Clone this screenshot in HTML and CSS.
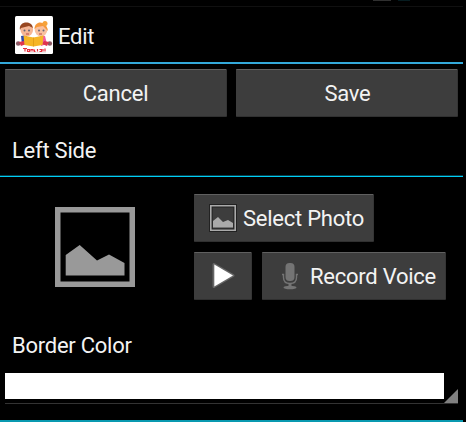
FILE: index.html
```html
<!DOCTYPE html>
<html lang="en">
<head>
<meta charset="utf-8">
<title>Edit</title>
<link rel="stylesheet" href="styles.css">
</head>
<body>
<div class="status"><i class="status-a"></i><i class="status-b"></i></div>
<main class="screen">
  <header class="bar">
    <svg class="logo" viewBox="0 0 38 38">
      <rect width="38" height="38" rx="1.5" fill="#fff"/>
      <path d="M6 20l6-1v9l-5 1z" fill="#304caa"/>
      <path d="M25 19l5 1 2 8-6 2z" fill="#f45ca0"/>
      <circle cx="3.200" cy="27.500" r="2.300" fill="#8a5964"/><circle cx="34.800" cy="27.500" r="2.300" fill="#8a5964"/>
      <path d="M4 26l5-1 2 3-5 2zM34 26l-5-1-2 3 5 2z" fill="#df344d"/>
      <circle cx="11.800" cy="14" r="6.300" fill="#f5b696"/><circle cx="26" cy="14" r="6.300" fill="#f9c1a0"/>
      <path d="M5 14C3 5 17 4 18 12l-4-2-8 2z" fill="#984721"/>
      <path d="M19.500 13c0-9 12-9 13.500 2l-5-5-6 1z" fill="#f6983a"/><circle cx="30" cy="7.500" r="2.500" fill="#f6a33a"/>
      <circle cx="9.500" cy="14.500" r="1" fill="#667"/><circle cx="14" cy="14.500" r="1" fill="#667"/><circle cx="24" cy="14.500" r="1" fill="#667"/><circle cx="28.500" cy="14.500" r="1" fill="#667"/>
      <path d="M11 18h3M24 18h3" stroke="#b84b45"/>
      <path d="M8.500 19.500l10 2 10-2-1 9.500-9 1.500-9-1.500z" fill="#f6b526"/>
      <path d="M18.500 21.500v9" stroke="#dc9413" stroke-width=".7"/>
      <path d="M8 32.500h4M10 32.500v3M12.500 33.500h2v2h-2zM16 35.500v-2h2v2M19.500 33.500v2h1M22.500 33v2.500M24.500 33.500h2v2h-2M28 33v2.500M30 32.500v3" fill="none" stroke="#e52e3c" stroke-width="1.200"/>
      <path d="M13 36.700h18" stroke="#ddd" stroke-width=".8"/>
    </svg>
    <h1 class="text title">Edit</h1>
  </header>
  <div class="actions">
    <button class="btn wide"><span class="text cancel">Cancel</span></button>
    <button class="btn wide"><span class="text save">Save</span></button>
  </div>
  <h2 class="section"><span class="text left">Left Side</span></h2>
  <section class="photo">
    <svg class="preview" viewBox="0 0 80 80">
      <path d="M2.750 2.750h74.500v74.500H2.750z" fill="none" stroke="#999" stroke-width="5.500"/>
      <path d="M10.700 48l14-10L42 53.500l12-6L69.500 56v12.500H10.700z" fill="#999"/>
    </svg>
    <div class="controls">
      <button class="btn select">
        <svg class="pic" viewBox="0 0 28 28">
          <path d="M1.800 1.800h24.400v24.400H1.800z" fill="none" stroke="#222" stroke-width="3.600"/>
          <path d="M1.800 1.800h24.400v24.400H1.800z" fill="none" stroke="#aaa" stroke-width="1.600"/>
          <path d="M4 17l5-4 5 5 5-2 5 3v4.500H4z" fill="#aaa"/>
        </svg>
        <span class="text select-text">Select Photo</span>
      </button>
      <div class="row">
        <button class="btn play" aria-label="Play">
          <svg width="24" height="28" viewBox="0 0 24 28"><path d="M2 2.500v22L21 13.500z" fill="#fff" stroke="#666" stroke-width="3" stroke-linejoin="round"/><path d="M2.300 2.500v22L21 13.500z" fill="#fff"/></svg>
        </button>
        <button class="btn record">
          <svg class="mic" viewBox="0 0 18 28"><rect x="4.500" y="1" width="9" height="18" rx="4" fill="#747474"/><path d="M1 12.500h1.500v3c0 4 2.500 6 6.500 6s6.500-2 6.500-6v-3H17" fill="none" stroke="#747474" stroke-width="1.400"/><path d="M7.500 21h3v3h-3z" fill="#747474"/><ellipse cx="9" cy="25.500" rx="6.500" ry="1.700" fill="#747474"/></svg>
          <span class="text record-text">Record Voice</span>
        </button>
      </div>
    </div>
  </section>
  <h3 class="label"><span class="text border">Border Color</span></h3>
  <div class="spinner"><div class="swatch"></div><svg class="corner" viewBox="0 0 14 14"><path d="M14 0v14H0z" fill="#808080"/></svg></div>
  <div class="end"></div>
</main>
</body>
</html>
```
FILE: styles.css
```css
* { box-sizing: border-box; }
body { margin: 0; height: 422px; overflow: hidden; background: #000; color: #f3f3f3; font: 400 22px/28px Roboto, sans-serif; letter-spacing: -0.25px; }
h1, h2, h3 { margin: 0; font: inherit; }
svg { display: block; flex: none; }
.status { display: flex; align-items: flex-start; gap: 7px; width: 463px; height: 7px; padding-left: 373px; border-bottom: 1px solid #101010; }
.status-a { width: 18px; height: 1px; background: #303030; }
.status-b { width: 12px; height: 1px; background: #061c20; }
.screen { width: 463px; }
.bar { display: flex; align-items: center; height: 57px; padding: 1px 0 0 15px; border-bottom: 2px solid #33a9da; }
.logo { width: 38px; height: 38px; margin-right: 5px; margin-top: 0; }
.text { white-space: nowrap; }
.title { margin-top: 3px; }
.actions { display: flex; gap: 9px; padding: 5px 5px 0; }
.btn { display: flex; align-items: center; height: 48px; margin: 0; padding: 0; border: solid; border-width: 1px 1px 1px 0; border-color: #606060 #353535 #303030; border-radius: 1px; background: #3d3d3d; color: inherit; font: inherit; letter-spacing: inherit; }
.wide { width: 222px; justify-content: center; padding-top: 1px; }
.save { margin-left: 2px; }
.section { height: 60px; padding: 20px 0 0 12px; border-bottom: 1px solid #00cdf5; box-shadow: inset 0 -1px #053f4b; }
.photo { display: flex; height: 142px; padding: 17px 0 0 55px; }
.preview { width: 80px; height: 80px; margin: 13px 59px 0 0; }
.controls { display: flex; flex-direction: column; gap: 10px; }
.row { display: flex; gap: 10px; }
.select { width: 180px; padding-left: 15px; }
.pic { width: 28px; height: 28px; margin-right: 6px; }
.select-text, .record-text { margin-top: 1px; }
.play { width: 58px; padding-left: 18px; }
.record { width: 184px; padding-left: 19px; }
.mic { width: 18px; height: 28px; margin-right: 11px; }
.label { height: 54px; padding: 13px 0 0 12px; }
.spinner { display: flex; align-items: flex-start; width: 453px; height: 31px; margin-left: 5px; border-bottom: 1px solid #333; }
.swatch { width: 439px; height: 26px; background: #fff; }
.corner { width: 14px; height: 14px; margin-top: 16px; }
.end { height: 2px; margin-top: 16px; background: #0999b0; }
```
